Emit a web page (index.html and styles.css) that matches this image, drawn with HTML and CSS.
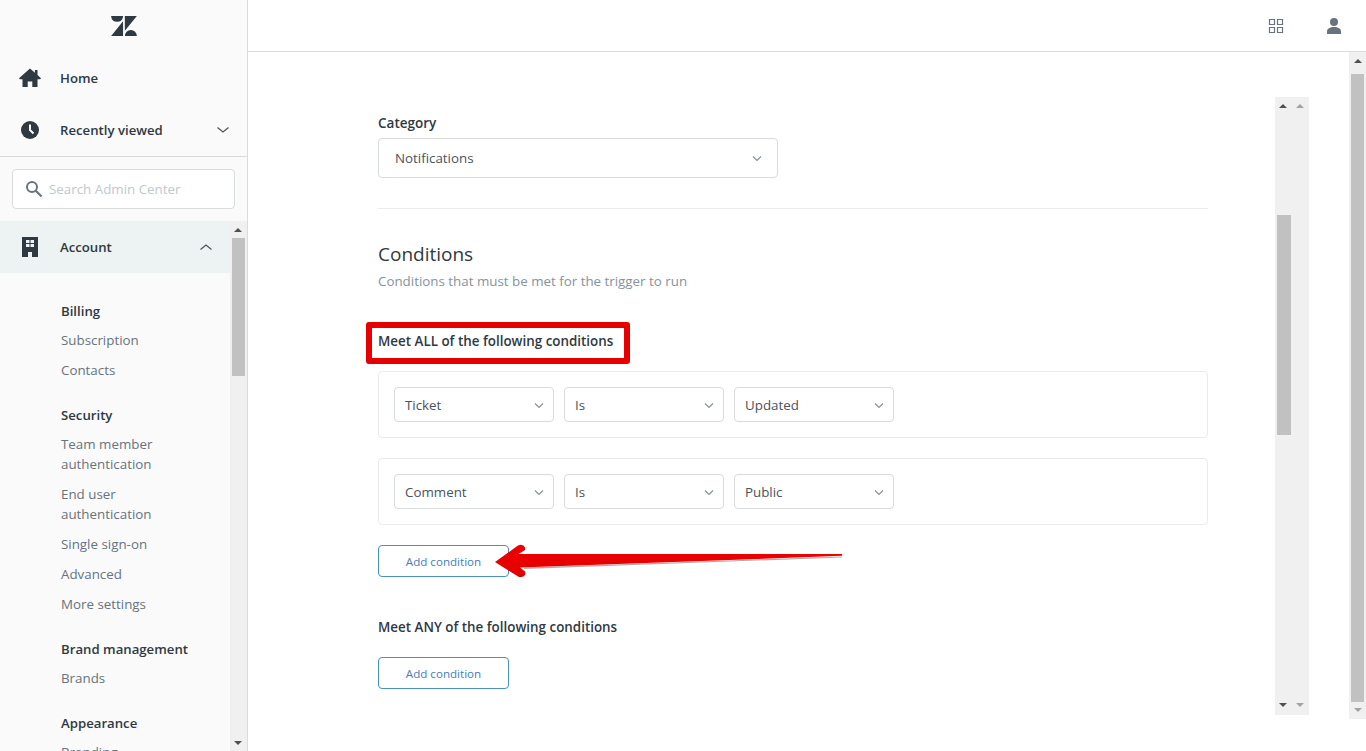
FILE: index.html
```html
<!DOCTYPE html>
<html lang="en">
<head>
<meta charset="utf-8">
<title>Admin Center</title>
<link rel="stylesheet" href="styles.css">
</head>
<body>
<div class="app">
  <aside class="sidebar">
    <div class="logo">
      <svg width="26" height="20" viewBox="0 0 27 21"><path class="dark" d="M0 0h12.500v.6A6.300 6.300 0 0 1 0 .6zM12.500 5.600V21H0zM14.400 15.400V0H27zM14.400 21a6.300 6.300 0 0 1 12.600 0z"/></svg>
    </div>
    <div class="nav-row">
      <svg class="nav-icon" width="24" height="24" viewBox="0 0 24 24"><path class="dark" d="M12 2.500 1 12.200l.8 1H4.500V21h5.200v-5.500h4.600V21h5.200v-7.800h2.700l.8-1-3.500-3.100V4h-2.600v2.800z"/></svg>
      <span class="nav-label">Home</span>
    </div>
    <div class="nav-row">
      <svg class="nav-icon" width="24" height="24" viewBox="0 0 24 24"><circle class="dark" cx="12" cy="12" r="9"/><path d="M12 6.500V12l3.500 3.500" fill="none" stroke="#fafafa" stroke-width="2"/></svg>
      <span class="nav-label">Recently viewed</span>
      <svg class="chev" width="14" height="14" viewBox="0 0 14 14"><path d="M1.500 4.500 7 9l5.500-4.500" fill="none" stroke="#49545c" stroke-width="1.200"/></svg>
    </div>
    <div class="search-wrap">
      <div class="search">
        <svg width="18" height="18" viewBox="0 0 18 18"><circle cx="7" cy="7" r="5" fill="none" stroke="#68737d" stroke-width="2"/><path d="m10.800 10.800 5.700 5.700" stroke="#68737d" stroke-width="2.200"/></svg>
        <span class="search-text">Search Admin Center</span>
      </div>
    </div>
    <div class="scroller">
      <div class="scroller-content">
        <div class="nav-row active">
          <svg class="nav-icon" width="24" height="24" viewBox="0 0 24 24"><path class="dark" fill-rule="evenodd" d="M4 2h16v20h-6v-5h-4v5H4zM8 5v3h3.500V5zm4.500 0v3H16V5zM8 9v3h3.500V9zm4.500 0v3H16V9z"/></svg>
          <span class="nav-label">Account</span>
          <svg class="chev" width="14" height="14" viewBox="0 0 14 14"><path d="M1.500 9.500 7 5l5.500 4.500" fill="none" stroke="#49545c" stroke-width="1.200"/></svg>
        </div>
        <nav class="groups">
          <div class="group">
            <div class="group-title">Billing</div>
            <a class="link">Subscription</a>
            <a class="link">Contacts</a>
          </div>
          <div class="group">
            <div class="group-title">Security</div>
            <a class="link">Team member authentication</a>
            <a class="link">End user authentication</a>
            <a class="link">Single sign-on</a>
            <a class="link">Advanced</a>
            <a class="link">More settings</a>
          </div>
          <div class="group">
            <div class="group-title">Brand management</div>
            <a class="link">Brands</a>
          </div>
          <div class="group">
            <div class="group-title">Appearance</div>
            <a class="link">Branding</a>
          </div>
        </nav>
      </div>
      <div class="bar bar-side">
        <span class="tri up"></span>
        <div class="thumb thumb-side"></div>
        <span class="tri down end"></span>
      </div>
    </div>
  </aside>

  <div class="right">
    <header class="topbar">
      <svg width="16" height="16" viewBox="0 0 16 16" class="top-icon"><path d="M1.500 1.500h5v5h-5zM9.500 1.500h5v5h-5zM1.500 9.500h5v5h-5zM9.500 9.500h5v5h-5z" fill="none" stroke="#68737d" stroke-width="1.200"/></svg>
      <svg width="16" height="18" viewBox="0 0 16 18" class="top-icon"><circle cx="8" cy="5" r="4" fill="#68737d"/><path d="M1 17v-2.500C1 11.500 4 10 8 10s7 1.500 7 4.500V17z" fill="#68737d"/></svg>
    </header>
    <div class="page">
      <main class="content">
        <div class="form">
          <label class="field-label">Category</label>
          <div class="select select-wide">
            <span>Notifications</span>
            <svg width="12" height="12" viewBox="0 0 12 12"><path d="M2 4.500 6 8.500l4-4" fill="none" stroke="#87929d" stroke-width="1.200"/></svg>
          </div>
          <hr class="rule">
          <h2 class="section-title">Conditions</h2>
          <p class="section-sub">Conditions that must be met for the trigger to run</p>

          <h3 class="cond-title cond-all">Meet ALL of the following conditions<span class="mark-box"></span></h3>
          <div class="cond-card">
            <div class="select"><span>Ticket</span><svg width="12" height="12" viewBox="0 0 12 12"><path d="M2 4.500 6 8.500l4-4" fill="none" stroke="#87929d" stroke-width="1.200"/></svg></div>
            <div class="select"><span>Is</span><svg width="12" height="12" viewBox="0 0 12 12"><path d="M2 4.500 6 8.500l4-4" fill="none" stroke="#87929d" stroke-width="1.200"/></svg></div>
            <div class="select"><span>Updated</span><svg width="12" height="12" viewBox="0 0 12 12"><path d="M2 4.500 6 8.500l4-4" fill="none" stroke="#87929d" stroke-width="1.200"/></svg></div>
          </div>
          <div class="cond-card">
            <div class="select"><span>Comment</span><svg width="12" height="12" viewBox="0 0 12 12"><path d="M2 4.500 6 8.500l4-4" fill="none" stroke="#87929d" stroke-width="1.200"/></svg></div>
            <div class="select"><span>Is</span><svg width="12" height="12" viewBox="0 0 12 12"><path d="M2 4.500 6 8.500l4-4" fill="none" stroke="#87929d" stroke-width="1.200"/></svg></div>
            <div class="select"><span>Public</span><svg width="12" height="12" viewBox="0 0 12 12"><path d="M2 4.500 6 8.500l4-4" fill="none" stroke="#87929d" stroke-width="1.200"/></svg></div>
          </div>
          <div class="btn-wrap">
            <button class="btn">Add condition</button>
            <svg class="arrow" width="352" height="38" viewBox="0 0 352 38">
              <defs>
                <linearGradient id="arrowFill" x1="0" y1="0" x2="0" y2="1">
                  <stop offset="0" stop-color="#f00000"/>
                  <stop offset="1" stop-color="#e00000"/>
                </linearGradient>
              </defs>
              <path d="M33 25 351 13.500 351 12.500 33 23.500z" fill="#8a8a8a" opacity=".7" transform="translate(0 1)"/>
              <path d="M4 19 27 2.500Q32 .5 34 4.500L34 7 27.500 11 351 11 351 12.800 29 24.500 34 28.500Q35.500 32.500 31 34L28 34z" fill="url(#arrowFill)"/>
            </svg>
          </div>
          <h3 class="cond-title cond-any">Meet ANY of the following conditions</h3>
          <button class="btn">Add condition</button>
        </div>
      </main>
      <div class="bar bar-inner">
        <div class="inner-col">
          <span class="tri up"></span>
          <div class="thumb thumb-inner"></div>
          <span class="tri down end dark-tri"></span>
        </div>
        <div class="inner-col inner-col-2">
          <span class="tri up light"></span>
          <span class="tri down end light"></span>
        </div>
      </div>
      <div class="bar bar-outer">
        <span class="tri up"></span>
        <div class="thumb thumb-outer"></div>
        <span class="tri down light"></span>
      </div>
    </div>
  </div>
</div>
</body>
</html>
```
FILE: styles.css
```css
* { box-sizing: border-box; }
html, body { margin: 0; padding: 0; height: 100%; overflow: hidden; }
body { font-family: "Open Sans", "Noto Sans", sans-serif; font-size: 13.35px; line-height: 20px; color: #2f3941; background: #fff; }
.dark { fill: #2f3941; }
.app { display: flex; height: 751px; }

.sidebar { width: 248px; flex: none; display: flex; flex-direction: column; background: #fafafa; border-right: 1px solid #d8dcde; height: 751px; }
.logo { height: 52px; flex: none; display: flex; justify-content: center; padding-top: 16px; padding-left: 1px; }
.nav-row { height: 52px; flex: none; display: flex; align-items: center; padding-left: 18px; font-size: 13.2px; font-weight: 600; color: #2f3941; }
.nav-icon { flex: none; }
.nav-label { margin-left: 18px; flex: 1; }
.chev { margin-right: 17px; flex: none; }
.search-wrap { height: 65px; flex: none; border-top: 1px solid #d8dcde; padding: 12px 12px 0; }
.search { height: 40px; width: 223px; display: flex; align-items: center; gap: 6px; padding-left: 12px; background: #fff; border: 1px solid #d8dcde; border-radius: 4px; }
.search-text { color: #c2c8cc; }

.scroller { flex: 1; min-height: 0; display: flex; overflow: hidden; }
.scroller-content { width: 230px; flex: none; overflow: hidden; }
.active { background: #edf3f3; }
.groups { padding: 28px 30px 0 61px; }
.group { margin-bottom: 20px; }
.group-title { font-weight: 600; font-size: 13.2px; line-height: 20px; color: #2f3941; margin-bottom: 4px; }
.link { display: block; padding: 5px 0; color: #68737d; line-height: 20px; }

.bar { background: #f0f0f0; flex: none; display: flex; flex-direction: column; align-items: center; }
.bar-side { width: 17px; }
.tri { display: block; width: 0; height: 0; border-left: 4px solid transparent; border-right: 4px solid transparent; flex: none; }
.tri.up { border-bottom: 4px solid #505050; margin: 7px 0 6px; }
.tri.down { border-top: 4px solid #a3a3a3; margin: 6px 0; }
.tri.up.light { border-bottom-color: #a3a3a3; }
.tri.down.light { border-top-color: #a3a3a3; }
.tri.down.dark-tri { border-top-color: #505050; }
.tri.end { margin-top: auto; }
.bar-side .tri { margin-right: 1px; }
.bar-side .tri.down { border-top-color: #505050; }
.bar-side .tri.up { margin-top: 7px; margin-bottom: 6px; }
.thumb { background: #c1c1c1; flex: none; }
.thumb-side { width: 13px; height: 138px; }

.right { flex: 1; min-width: 0; display: flex; flex-direction: column; }
.topbar { height: 52px; flex: none; display: flex; justify-content: flex-end; align-items: center; gap: 42px; padding-right: 24px; background: #fff; border-bottom: 1px solid #d8dcde; }
.top-icon { flex: none; }

.page { flex: 1; min-height: 0; display: flex; align-items: flex-start; overflow: hidden; }
.content { flex: none; width: 1027px; padding: 61px 0 0 130px; }
.form { width: 830px; }
.field-label { display: block; font-weight: 600; font-size: 13.5px; line-height: 20px; margin-bottom: 5px; color: #2f3941; }
.select { display: flex; align-items: center; justify-content: space-between; width: 160px; height: 35px; padding: 0 8px 0 10px; background: #fff; border: 1px solid #d8dcde; border-radius: 4px; color: #49545c; }
.select-wide { width: 400px; height: 40px; padding: 0 14px 0 16px; }
.rule { border: 0; border-top: 1px solid #e9ebed; margin: 30px 0 0; }
.section-title { margin: 31px 0 0; font-size: 19px; font-weight: 400; line-height: 28px; color: #2f3941; }
.section-sub { margin: 3px 0 0; line-height: 20px; color: #87929d; }
.cond-title { margin: 0; font-size: 13.4px; font-weight: 600; line-height: 20px; color: #2f3941; }
.cond-all { position: relative; margin-top: 40px; margin-bottom: 20px; }
.mark-box { position: absolute; left: -12px; top: -9px; width: 264px; height: 42px; border: 6px solid #e60000; border-radius: 3px; }
.cond-card { display: flex; gap: 10px; height: 67px; padding: 15px 15px 0; margin-bottom: 20px; border: 1px solid #e9ebed; border-radius: 4px; background: #fff; }
.btn-wrap { position: relative; height: 32px; }
.btn { display: block; width: 131px; height: 32px; padding: 1px 0 0; background: #fff; border: 1px solid #4a90c8; border-radius: 4px; font-family: inherit; font-size: 11.6px; line-height: 20px; color: #3f7fba; }
.arrow { position: absolute; left: 113px; top: -2px; overflow: visible; }
.cond-any { margin-top: 40px; margin-bottom: 20px; }

.bar-inner { width: 34px; height: 618px; margin-top: 45px; flex-direction: row; align-items: stretch; }
.inner-col { width: 16px; display: flex; flex-direction: column; align-items: center; }
.inner-col-2 { width: 18px; }
.inner-col .tri.end { margin-bottom: 8px; }
.thumb-inner { width: 14px; height: 220px; margin-top: 101px; align-self: flex-start; margin-left: 2px; }
.bar-outer { width: 17px; margin-left: 40px; height: 667px; }
.thumb-outer { width: 13px; height: 628px; }
.bar-outer .tri.up { margin-top: 7px; margin-bottom: 11px; }
.bar-outer .tri.down { margin-top: 6px; }
```
